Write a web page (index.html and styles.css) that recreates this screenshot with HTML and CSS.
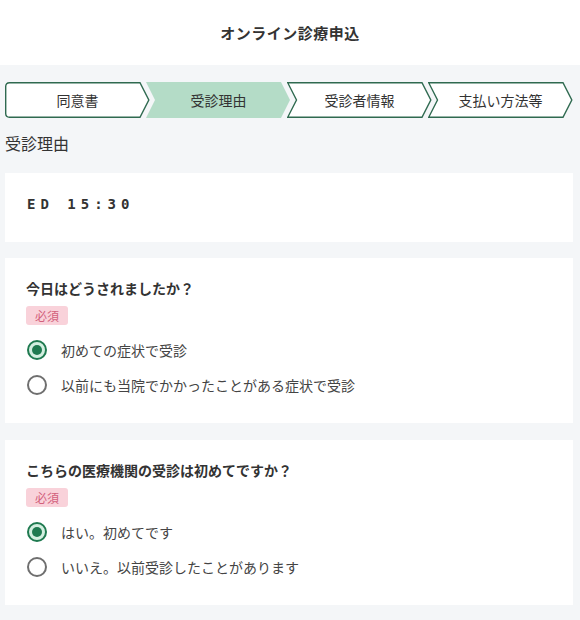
FILE: index.html
```html
<!DOCTYPE html>
<html lang="ja">
<head>
    <meta charset="UTF-8">
    <meta name="viewport" content="width=device-width, initial-scale=1.0">
    <title>オンライン診療申込</title>
    <link rel="stylesheet" href="styles.css">
</head>
<body>
    <header class="top">
        <h1>オンライン診療申込</h1>
    </header>

    <main class="page">
        <!-- ステップ -->
        <div class="steps">
            <div class="step">
                <svg viewBox="0 0 145 36" width="145" height="36">
                    <path d="M4.5 0.7 H135 L143.8 18 L135 35.3 H4.5 Q0.7 35.3 0.7 31.5 V4.5 Q0.7 0.7 4.5 0.7 Z" fill="#fff" stroke="#2f6a50" stroke-width="1.4"/>
                </svg>
                <span>同意書</span>
            </div>
            <div class="step">
                <svg viewBox="0 0 145 36" width="145" height="36">
                    <path d="M0 0 H135 L144 18 L135 36 H0 L9 18 Z" fill="#b4dcc7"/>
                </svg>
                <span>受診理由</span>
            </div>
            <div class="step">
                <svg viewBox="0 0 145 36" width="145" height="36">
                    <path d="M0.7 0.7 H135 L143.8 18 L135 35.3 H0.7 L9.5 18 Z" fill="#fff" stroke="#2f6a50" stroke-width="1.4"/>
                </svg>
                <span>受診者情報</span>
            </div>
            <div class="step">
                <svg viewBox="0 0 145 36" width="145" height="36">
                    <path d="M0.7 0.7 H135 L143.8 18 L135 35.3 H0.7 L9.5 18 Z" fill="#fff" stroke="#2f6a50" stroke-width="1.4"/>
                </svg>
                <span>支払い方法等</span>
            </div>
        </div>

        <h2 class="section-title">受診理由</h2>

        <div class="card code-card">
            <p class="code">ED 15:30</p>
        </div>

        <div class="card">
            <p class="question">今日はどうされましたか？</p>
            <span class="badge">必須</span>
            <ul class="options">
                <li><span class="radio checked"></span>初めての症状で受診</li>
                <li><span class="radio"></span>以前にも当院でかかったことがある症状で受診</li>
            </ul>
        </div>

        <div class="card">
            <p class="question">こちらの医療機関の受診は初めてですか？</p>
            <span class="badge">必須</span>
            <ul class="options">
                <li><span class="radio checked"></span>はい。初めてです</li>
                <li><span class="radio"></span>いいえ。以前受診したことがあります</li>
            </ul>
        </div>
    </main>
</body>
</html>
```

FILE: styles.css
```css
body {
    margin: 0;
    font-family: "Noto Sans CJK JP", "Noto Sans", sans-serif;
    color: #333;
    background-color: #f4f6f8;
}

.top {
    background-color: #fff;
    height: 65px;
    display: flex;
    align-items: center;
    justify-content: center;
}

.top h1 {
    margin: 0;
    font-size: 15px;
    font-weight: bold;
    color: #333;
    letter-spacing: 0.5px;
}

.page {
    padding: 17px 7px 20px 5px;
}

/* ステップ */
.steps {
    display: flex;
}

.step {
    display: grid;
    width: 145px;
    height: 36px;
    margin-left: -4px;
}

.step:first-child {
    margin-left: 0;
}

.step svg,
.step span {
    grid-area: 1 / 1;
}

.step span {
    display: flex;
    align-items: center;
    justify-content: center;
    font-size: 14px;
    color: #333;
}

.section-title {
    margin: 13px 0 18px;
    font-size: 16px;
    font-weight: normal;
    line-height: 24px;
    color: #333;
}

.card {
    background-color: #fff;
    padding: 21px 21px 26px;
    margin-bottom: 17px;
}

.code-card {
    padding: 22px 22px 29px;
    margin-bottom: 16px;
}

.code {
    margin: 0;
    font-family: "DejaVu Sans Mono", monospace;
    font-size: 14px;
    font-weight: bold;
    line-height: 18px;
    letter-spacing: 5px;
    color: #333;
}

.question {
    margin: 0 0 9px;
    font-size: 14px;
    font-weight: bold;
    line-height: 18px;
    color: #333;
}

.badge {
    display: block;
    width: fit-content;
    height: 19px;
    line-height: 19px;
    padding: 0 9px;
    font-size: 12px;
    color: #d2607c;
    background-color: #f9d2da;
    border-radius: 3px;
}

.options {
    list-style: none;
    margin: 13px 0 0;
    padding: 0;
    display: flex;
    flex-direction: column;
    gap: 11px;
}

.options li {
    display: flex;
    align-items: center;
    gap: 14px;
    height: 24px;
    line-height: 24px;
    font-size: 14px;
    color: #444;
    padding-left: 1px;
}

.radio {
    box-sizing: border-box;
    width: 20px;
    height: 20px;
    border-radius: 50%;
    border: 2px solid #6f6f6f;
    background-color: #fff;
    display: grid;
    place-items: center;
}

.radio.checked {
    border-color: #1f7a50;
    background-color: #d3efe0;
}

.radio.checked::after {
    content: "";
    width: 10px;
    height: 10px;
    border-radius: 50%;
    background-color: #1f7a50;
}
```
